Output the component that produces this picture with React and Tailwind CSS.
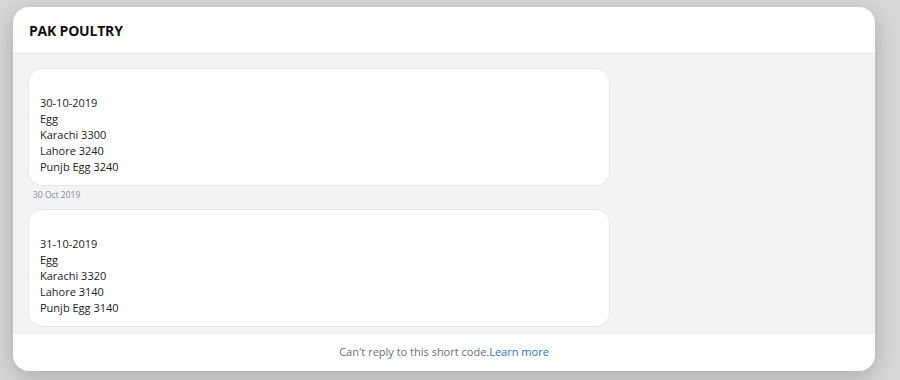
import React from 'react';

const messages = [
  { id: 1, lines: ['30-10-2019', 'Egg', 'Karachi 3300', 'Lahore 3240', 'Punjb Egg 3240'], date: '30 Oct 2019' },
  { id: 2, lines: ['31-10-2019', 'Egg', 'Karachi 3320', 'Lahore 3140', 'Punjb Egg 3140'] },
];

const App = () => {
  return (
    <div className="w-[900px] h-[380px] bg-[#d8d8d8] pt-[7px] pl-[13px] font-['Open_Sans',sans-serif] overflow-hidden">
      <div className="w-[862px] h-[364px] bg-white rounded-[16px] shadow-[0_6px_24px_rgba(0,0,0,0.22)] flex flex-col overflow-hidden">
        <div className="h-[47px] shrink-0 flex items-center px-4 border-b border-[#e3e5e8]">
          <h1 className="text-[14px] font-bold text-[#111] tracking-[-0.2px]">PAK POULTRY</h1>
        </div>

        <div className="flex-1 bg-[#f2f3f5] overflow-hidden pt-[14px] pl-[15px]">
          {messages.map(m => (
            <div key={m.id} className="mb-[8px]">
              <div className="w-[582px] bg-white border border-[#e4e6ea] rounded-[14px] px-[11px] py-[10px] text-[11px] leading-[16px] text-[#222]">
                <div className="h-[16px]" />
                {m.lines.map((l, i) => <div key={i}>{l}</div>)}
              </div>
              {m.date && (
                <p className="text-[8.5px] text-[#8a8d91] mt-[3px] ml-[5px] leading-[12px]">{m.date}</p>
              )}
            </div>
          ))}
        </div>

        <div className="h-[38px] shrink-0 border-t border-[#eceef1] flex items-center justify-center text-[11px]">
          <span className="text-[#6b6f75]">Can't reply to this short code.</span>
          <a className="text-[#1a73e8] font-medium">Learn more</a>
        </div>
      </div>
    </div>
  );
};

export default App;
